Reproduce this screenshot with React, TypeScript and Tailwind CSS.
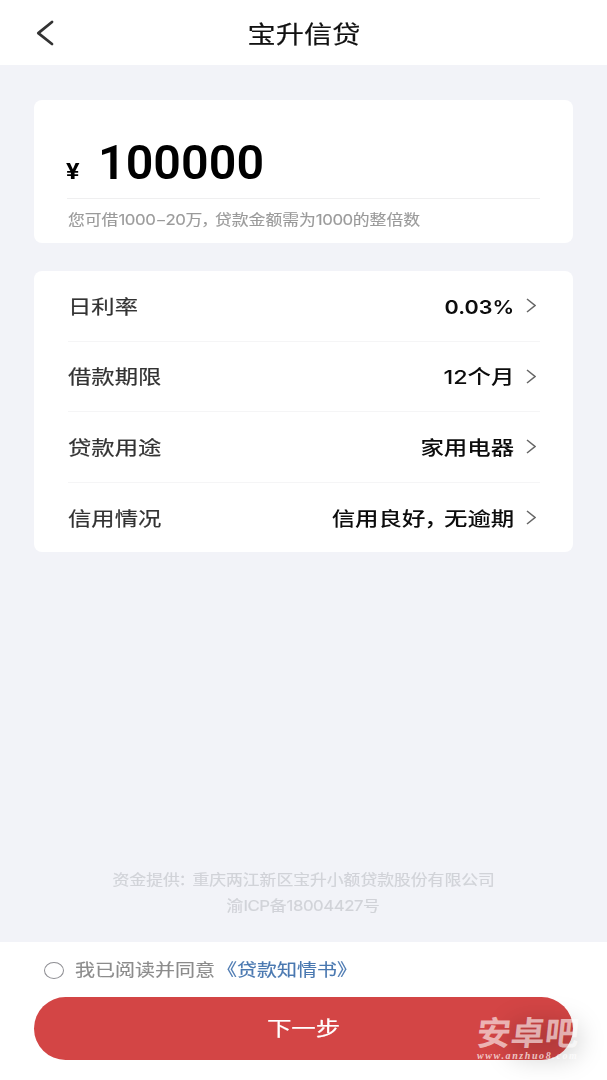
import type { ReactNode } from "react";
import clsx from "clsx";

const rows = [
  { label: "日利率", value: "0.03%" },
  { label: "借款期限", value: "12个月" },
  { label: "贷款用途", value: "家用电器" },
  { label: "信用情况", value: "信用良好，无逾期" },
];

// Extended-width text
function Wide({ children, className }: { children: ReactNode; className?: string }) {
  return (
    <span className={clsx("inline-block whitespace-nowrap", className)}>
      {children}
    </span>
  );
}

// Latin digits set a little tighter than the Chinese text around them
function Num({ children }: { children: ReactNode }) {
  return <span className="tracking-[-0.35px]">{children}</span>;
}

function Row({ label, value }: { label: string; value: string }) {
  const [head, tail] = value.split("，");

  return (
    <div className="flex h-[70.5px] items-center border-b border-[#f5f5f6] pt-[3px] last:border-b-0">
      <Wide className="origin-left scale-x-[1.21] text-[19.3px] text-[#333] [-webkit-text-stroke:0.2px]">{label}</Wide>
      <div className="ml-auto flex items-center">
        <Wide
          className={clsx(
            "origin-right text-[19.3px] text-[#0c0c0c]",
            value.endsWith("%") ? "scale-x-[1.12] font-semibold" : "scale-x-[1.215] font-medium"
          )}
        >
          {head}
          {tail && <span className="relative -left-px tracking-[-4px]">，</span>}
          {tail}
        </Wide>
        <svg className="mr-1 -mt-[3px] ml-3 h-[15px] w-2.5" viewBox="0 0 10 15" fill="none">
          <path d="M1 1L9 7.5L1 14" stroke="#666" strokeWidth="1.5" />
        </svg>
      </div>
    </div>
  );
}

export default function App() {
  return (
    <div className="flex h-[1080px] w-[607px] flex-col overflow-hidden bg-[#f2f3f8] font-['Inter','Noto_Sans_CJK_SC',sans-serif]">
      <header className="flex h-[65px] items-center bg-white pt-1">
        <div className="flex flex-1 pl-9">
          <svg className="-mt-[3px] h-[26px] w-[19px]" viewBox="0 0 19 26" fill="none">
            <path d="M16 2L2.3 13.2L16 24" stroke="#333" strokeWidth="2.8" strokeLinecap="round" strokeLinejoin="round" />
          </svg>
        </div>
        <h1>
          <Wide className="origin-center scale-x-[1.2] text-[23.5px] text-[#111] [-webkit-text-stroke:0.2px]">宝升信贷</Wide>
        </h1>
        <div className="flex-1 pr-9" />
      </header>

      <main className="flex flex-1 flex-col px-[34px] pt-[35px]">
        <section className="h-[143px] rounded-lg bg-white px-[33px]">
          <div className="flex h-[99px] items-baseline border-b border-[#efeff0] pt-[31px] font-['Roboto'] text-black">
            <Wide className="-ml-px origin-left scale-x-[1.15] text-[22px] leading-none font-bold">¥</Wide>
            <Wide className="ml-5 origin-left scale-x-[1.02] text-[47.5px] leading-[64px] font-semibold">
              100000
            </Wide>
          </div>
          <p className="pt-[10px] pl-px leading-5 text-[#9a9a9a]">
            <Wide className="origin-left scale-x-[1.175] text-[14.3px] [-webkit-text-stroke:0.15px]">
              您可借<Num>1000−20</Num>万<span className="relative -left-px tracking-[-3.5px]">，</span>贷款金额需为<Num>1000</Num>的整倍数
            </Wide>
          </p>
        </section>

        <section className="mt-7 h-[281px] rounded-lg bg-white pr-[33px] pl-[34px]">
          {rows.map((row) => (
            <Row key={row.label} {...row} />
          ))}
        </section>

        <div className="mt-auto pb-6 text-center text-[14.3px] leading-[25.5px] text-[#d1d3d8] [-webkit-text-stroke:0.2px]">
          <p>
            <Wide className="origin-center scale-x-[1.175]">
              资金提供<span className="relative -left-px tracking-[-3.5px]">：</span>重庆两江新区宝升小额贷款股份有限公司
            </Wide>
          </p>
          <p>
            <Wide className="origin-center scale-x-[1.175]">
              渝<Num>ICP</Num>备<Num>18004427</Num>号
            </Wide>
          </p>
        </div>
      </main>

      <footer className="h-[138px] bg-white px-[34px]">
        <label className="flex h-[55px] items-center pt-0.5 pl-2.5">
          <span className="h-[17px] w-5 rounded-[50%] border-[1.5px] border-[#8e8e93]" />
          <Wide className="ml-[11px] origin-left scale-x-[1.185] text-[16.9px] text-[#8c8c8c] [-webkit-text-stroke:0.15px]">
            我已阅读并同意<a className="ml-[1.5px] text-[#4a78b0]">《贷款知情书》</a>
          </Wide>
        </label>
        <div className="relative">
          <button className="h-[63px] w-[539px] rounded-full bg-[#d34545] pt-0.5 text-white">
            <Wide className="origin-center scale-x-[1.2] text-[20.4px] [-webkit-text-stroke:0.2px]">下一步</Wide>
          </button>
          <div className="absolute top-[15px] left-[443px] w-[104px] text-white/60">
            <div className="absolute top-[8px] left-[30px] h-[40px] w-[74px] rounded-full bg-black/15 blur-md" />
            <Wide className="relative origin-left scale-x-[1.03] -skew-x-6 text-[33px] leading-[42px] font-bold">安卓吧</Wide>
            <Wide className="absolute top-[38px] left-0 origin-left font-['Liberation_Serif'] text-[10px] leading-3 font-bold tracking-[1.6px] text-white/70 italic">
              www.anzhuo8.com
            </Wide>
          </div>
        </div>
      </footer>
    </div>
  );
}
